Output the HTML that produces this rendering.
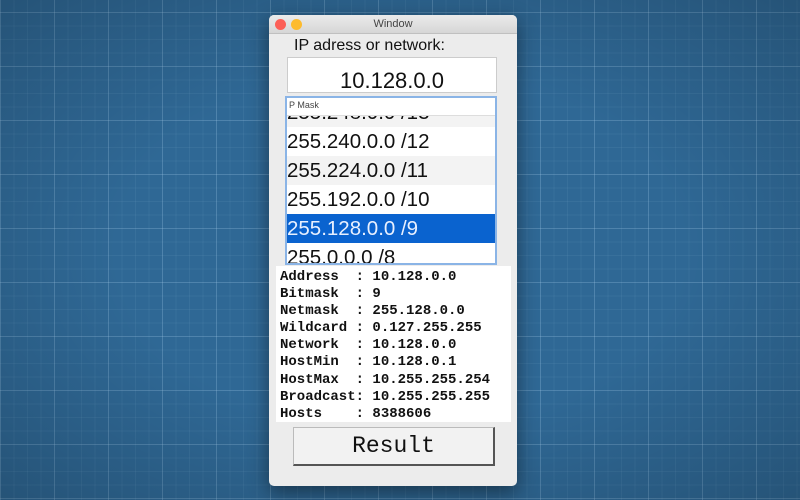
<!DOCTYPE html><html><head><style>
body{margin:0;width:800px;height:500px;overflow:hidden;font-family:"Liberation Sans",sans-serif;
background-color:#2f6895;
background-image:linear-gradient(rgba(160,200,230,.22) 1px,transparent 1px),linear-gradient(90deg,rgba(160,200,230,.22) 1px,transparent 1px),linear-gradient(rgba(160,200,230,.08) 1px,transparent 1px),linear-gradient(90deg,rgba(160,200,230,.08) 1px,transparent 1px);
background-size:54px 54px,54px 54px,13.5px 13.5px,13.5px 13.5px;background-position:0 12px,0 0,0 12px,0 0;position:relative}
.vig{position:absolute;inset:0;background:radial-gradient(ellipse at center,rgba(0,0,0,0) 50%,rgba(0,0,0,.2) 100%)}
.win{position:absolute;left:269px;top:15px;width:248px;height:471px;background:#ececec;border-radius:5px;box-shadow:0 6px 20px rgba(0,0,0,.45);overflow:hidden}
.tb{height:18px;background:linear-gradient(#ebebeb,#d6d6d6);border-bottom:1px solid #c0c0c0;text-align:center;font-size:11px;line-height:19px;color:#444}
.dot{position:absolute;top:4px;width:11px;height:11px;border-radius:50%}
.abs{position:absolute}
.row{height:29px;line-height:30px;font-size:20.5px;padding-left:0px;color:#111;white-space:nowrap}
.mono{font-family:"Liberation Mono",monospace;font-weight:bold;font-size:14px;line-height:17.1px;color:#111;white-space:pre}
</style></head><body><div class="vig"></div>
<div class="win">
<div class="tb">Window</div>
<div class="dot" style="left:6px;background:#fc5f57"></div>
<div class="dot" style="left:22px;background:#fdbb2e"></div>
<div class="abs" style="left:25px;top:22px;font-size:16px;color:#111">IP adress or network:</div>
<div class="abs" style="left:18px;top:42px;width:208px;height:34px;background:#fff;border:1px solid #ccc;text-align:center;font-size:22px;line-height:46px;color:#111">10.128.0.0</div>
<div class="abs" style="left:16px;top:81px;width:208px;height:165px;background:#fff;border:2px solid #8ab4e6;overflow:hidden">
<div style="height:17px;font-size:9px;line-height:14px;color:#444;border-bottom:1px solid #ddd;padding-left:2px">P Mask</div>
<div style="margin-top:-18px">
<div class="row" style="background:#f3f3f3;clip-path:inset(18px 0 0 0)">255.248.0.0 /13</div>
<div class="row">255.240.0.0 /12</div>
<div class="row" style="background:#f3f3f3">255.224.0.0 /11</div>
<div class="row">255.192.0.0 /10</div>
<div class="row" style="background:#0a63cf;color:#e8f0ff">255.128.0.0 /9</div>
<div class="row">255.0.0.0 /8</div>
</div></div>
<div class="abs mono" style="left:7px;top:251px;width:235px;height:156px;background:#fff;padding:3px 0 0 4px;box-sizing:border-box">Address  : 10.128.0.0
Bitmask  : 9
Netmask  : 255.128.0.0
Wildcard : 0.127.255.255
Network  : 10.128.0.0
HostMin  : 10.128.0.1
HostMax  : 10.255.255.254
Broadcast: 10.255.255.255
Hosts    : 8388606</div>
<div class="abs" style="left:24px;top:412px;width:199px;height:36px;background:#f2f2f2;border:1px solid #bbb;border-right:2px solid #555;border-bottom:2px solid #555;text-align:center;font-family:'Liberation Mono',monospace;font-size:23px;line-height:36px;color:#111">Result</div>
</div>
</body></html>
